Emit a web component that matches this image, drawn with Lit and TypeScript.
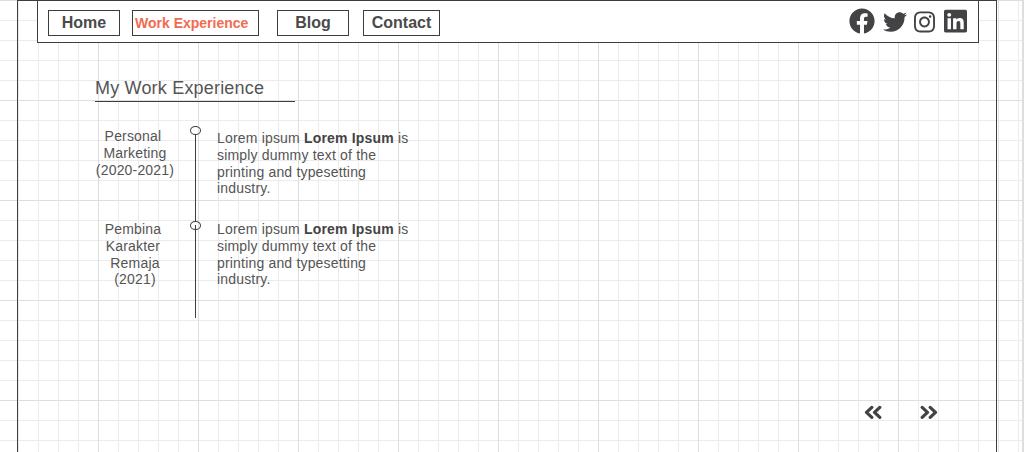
import { LitElement, html, css, svg } from "lit";
import { customElement } from "lit/decorators.js";

const icon = (cls: string, box: string, d: string) =>
  html`<svg class=${cls} viewBox=${box} preserveAspectRatio="none">${svg`<path d=${d} />`}</svg>`;

const FACEBOOK =
  "M504 256C504 119 393 8 256 8S8 119 8 256c0 123.78 90.69 226.38 209.25 245V327.69h-63V256h63v-54.64c0-62.15 37-96.48 93.67-96.48 27.14 0 55.52 4.84 55.52 4.84v61h-31.28c-30.8 0-40.41 19.12-40.41 38.73V256h68.78l-11 71.69h-57.78V501C413.31 482.38 504 379.78 504 256z";
const TWITTER =
  "M459.37 151.716c.325 4.548.325 9.097.325 13.645 0 138.72-105.583 298.558-298.558 298.558-59.452 0-114.68-17.219-161.137-47.106 8.447.974 16.568 1.299 25.34 1.299 49.055 0 94.213-16.568 130.274-44.832-46.132-.975-84.792-31.188-98.112-72.772 6.498.974 12.995 1.624 19.818 1.624 9.421 0 18.843-1.3 27.614-3.573-48.081-9.747-84.143-51.98-84.143-102.985v-1.299c13.969 7.797 30.214 12.67 47.431 13.319-28.264-18.843-46.781-51.005-46.781-87.391 0-19.492 5.197-37.36 14.294-52.954 51.655 63.675 129.3 105.258 216.365 109.807-1.624-7.797-2.599-15.918-2.599-24.04 0-57.828 46.782-104.934 104.934-104.934 30.213 0 57.502 12.67 76.67 33.137 23.715-4.548 46.456-13.32 66.599-25.34-7.798 24.366-24.366 44.833-46.132 57.827 21.117-2.273 41.584-8.122 60.426-16.243-14.292 20.791-32.161 39.308-52.628 54.253z";
const INSTAGRAM =
  "M224.1 141c-63.6 0-114.9 51.3-114.9 114.9s51.3 114.9 114.9 114.9S339 319.5 339 255.9 287.7 141 224.1 141zm0 189.6c-41.1 0-74.7-33.5-74.7-74.7s33.5-74.7 74.7-74.7 74.7 33.5 74.7 74.7-33.6 74.7-74.7 74.7zm146.4-194.3c0 14.9-12 26.8-26.8 26.8-14.9 0-26.8-12-26.8-26.8s12-26.8 26.8-26.8 26.8 12 26.8 26.8zm76.1 27.2c-1.7-35.9-9.9-67.7-36.2-93.9-26.2-26.2-58-34.4-93.9-36.2-37-2.1-147.9-2.1-184.9 0-35.8 1.7-67.6 9.9-93.9 36.1s-34.4 58-36.2 93.9c-2.1 37-2.1 147.9 0 184.9 1.7 35.9 9.9 67.7 36.2 93.9s58 34.4 93.9 36.2c37 2.1 147.9 2.1 184.9 0 35.9-1.7 67.7-9.9 93.9-36.2 26.2-26.2 34.4-58 36.2-93.9 2.1-37 2.1-147.8 0-184.8zM398.8 388c-7.8 19.6-22.9 34.7-42.6 42.6-29.5 11.7-99.5 9-132.1 9s-102.7 2.6-132.1-9c-19.6-7.8-34.7-22.9-42.6-42.6-11.7-29.5-9-99.5-9-132.1s-2.6-102.7 9-132.1c7.8-19.6 22.9-34.7 42.6-42.6 29.5-11.7 99.5-9 132.1-9s102.7-2.6 132.1 9c19.6 7.8 34.7 22.9 42.6 42.6 11.7 29.5 9 99.5 9 132.1s2.7 102.7-9 132.1z";
const LINKEDIN =
  "M416 32H31.9C14.3 32 0 46.5 0 64.3v383.4C0 465.5 14.3 480 31.9 480H416c17.6 0 32-14.5 32-32.3V64.3c0-17.8-14.4-32.3-32-32.3zM135.4 416H69V202.2h66.5V416zm-33.2-243c-21.3 0-38.5-17.3-38.5-38.5S80.9 96 102.2 96c21.2 0 38.5 17.3 38.5 38.5 0 21.3-17.2 38.5-38.5 38.5zm282.1 243h-66.4V312c0-24.8-.5-56.7-34.5-56.7-34.6 0-39.9 27-39.9 54.9V416h-66.4V202.2h63.7v29.2h.9c8.9-16.8 30.6-34.5 62.9-34.5 67.2 0 79.7 44.3 79.7 101.9V416z";

@customElement("app-root")
export class AppRoot extends LitElement {
  static styles = css`
    :host {
      display: block;
      height: 452px;
      overflow: hidden;
      font-family: "Liberation Sans", Arial, sans-serif;
      color: #555;
      background:
        linear-gradient(#dedede, #dedede) 1022px 0 / 2px 100% no-repeat,
        linear-gradient(#dedede 1px, transparent 1px) 0 0 / 100% 100px,
        linear-gradient(#ebebeb 1px, transparent 1px) 0 0 / 100% 20px,
        linear-gradient(90deg, #ebebeb 1px, transparent 1px) 1018px 0 / 20px 100% no-repeat,
        linear-gradient(90deg, #dedede 1px, transparent 1px) 998px 0 / 20px 100% no-repeat,
        #fff;
    }
    .frame {
      box-sizing: border-box;
      width: 980px;
      height: 452px;
      margin-left: 17px;
      border: 1px solid #3d3d3f;
      border-bottom: 0;
      background:
        linear-gradient(90deg, #dedede 1px, transparent 1px) 80px 0 / 100px 100%,
        linear-gradient(90deg, #ebebeb 1px, transparent 1px) 0 0 / 20px 100%;
      display: flex;
      flex-direction: column;
    }
    .bar {
      box-sizing: border-box;
      width: 942px;
      height: 42px;
      margin-left: 19px;
      padding: 9px 11px 0 10px;
      border: 1px solid #3d3d3f;
      border-top: 0;
      background: #fff;
      display: flex;
      align-items: flex-start;
    }
    .tab {
      box-sizing: border-box;
      height: 26px;
      border: 1px solid #3d3d3f;
      font-weight: bold;
      font-size: 16px;
      line-height: 24px;
      color: #4a4a4a;
      text-align: center;
    }
    .home { width: 72px; }
    .work {
      width: 127px;
      margin-left: 12px;
      padding-left: 2px;
      font-size: 14px;
      color: #f26b50;
      text-align: left;
    }
    .blog { width: 72px; margin-left: 18px; }
    .contact { width: 77px; margin-left: 14px; }
    .social {
      margin-left: auto;
      margin-top: -2px;
      height: 26px;
      display: flex;
      align-items: center;
    }
    svg { display: block; fill: #434345; }
    .fb { width: 26px; height: 26px; }
    .tw { width: 24px; height: 24px; margin: 2px 0 0 8px; }
    .ig { width: 21px; height: 24px; margin: 1px 0 0 7px; }
    .li { width: 23px; height: 26px; margin-left: 9px; }
    h1 {
      box-sizing: border-box;
      width: 200px;
      height: 25px;
      margin: 34px 0 0 77px;
      border-bottom: 1px solid #3d3d3f;
      font-weight: normal;
      font-size: 18px;
      line-height: 22px;
      letter-spacing: 0.19px;
    }
    .timeline {
      margin: 24px 0 0 77px;
      display: grid;
      grid-template-columns: 80px 40px 1fr;
      grid-template-rows: 95px 97px;
      font-size: 14px;
      line-height: 16.8px;
      letter-spacing: 0.18px;
    }
    .period { padding-top: 2px; text-align: center; white-space: pre; }
    .period.late { padding-top: 0; }
    .rail { display: flex; flex-direction: column; align-items: center; padding-left: 1px; }
    .rail::before {
      content: "";
      box-sizing: border-box;
      width: 11px;
      height: 9px;
      flex: none;
      border: 1px solid #3d3d3f;
      border-radius: 50%;
    }
    .rail::after { content: ""; flex: 1; width: 1px; background: #3d3d3f; }
    .through { background: linear-gradient(#3d3d3f, #3d3d3f) 20px 4px / 1px 100% no-repeat; }
    .text { width: 200px; padding: 4px 0 0 2px; white-space: pre; }
    .text.late { padding-top: 0; }
    b { color: #444; }
    .pager {
      margin: 86.5px 58px 0 auto;
      display: flex;
      gap: 38px;
    }
    .chev { width: 18px; height: 14px; fill: none; stroke: #434345; stroke-width: 3.2; stroke-linejoin: round; stroke-linecap: round; }
  `;

  private copy(cls: string) {
    return html`<div class=${cls}><div><span>Lorem ipsum </span><b>Lorem Ipsum</b><span> is</span></div><div>simply dummy text of the</div><div>printing and typesetting</div><div>industry.</div></div>`;
  }

  render() {
    return html`
      <div class="frame">
        <nav class="bar">
          <div class="tab home">Home</div>
          <div class="tab work">Work Experience</div>
          <div class="tab blog">Blog</div>
          <div class="tab contact">Contact</div>
          <div class="social">
            ${icon("fb", "0 0 512 512", FACEBOOK)}
            ${icon("tw", "0 0 512 512", TWITTER)}
            ${icon("ig", "0 0 448 512", INSTAGRAM)}
            ${icon("li", "0 0 448 512", LINKEDIN)}
          </div>
        </nav>
        <h1>My Work Experience</h1>
        <section class="timeline">
          <div class="period">Personal 
Marketing
(2020-2021)</div>
          <div class="rail"></div>
          ${this.copy("text")}
          <div class="period late">Pembina 
Karakter 
Remaja
(2021)</div>
          <div class="rail through"></div>
          ${this.copy("text late")}
        </section>
        <div class="pager">
          <svg class="chev" viewBox="0 0 18 14"><path d="M7.8 2.4 2.5 7.4l5.3 5M15.8 2.4l-5.3 5 5.3 5" /></svg>
          <svg class="chev" viewBox="0 0 18 14"><path d="M2.2 2.4 7.5 7.4l-5.3 5M10.2 2.4l5.3 5-5.3 5" /></svg>
        </div>
      </div>
    `;
  }
}
